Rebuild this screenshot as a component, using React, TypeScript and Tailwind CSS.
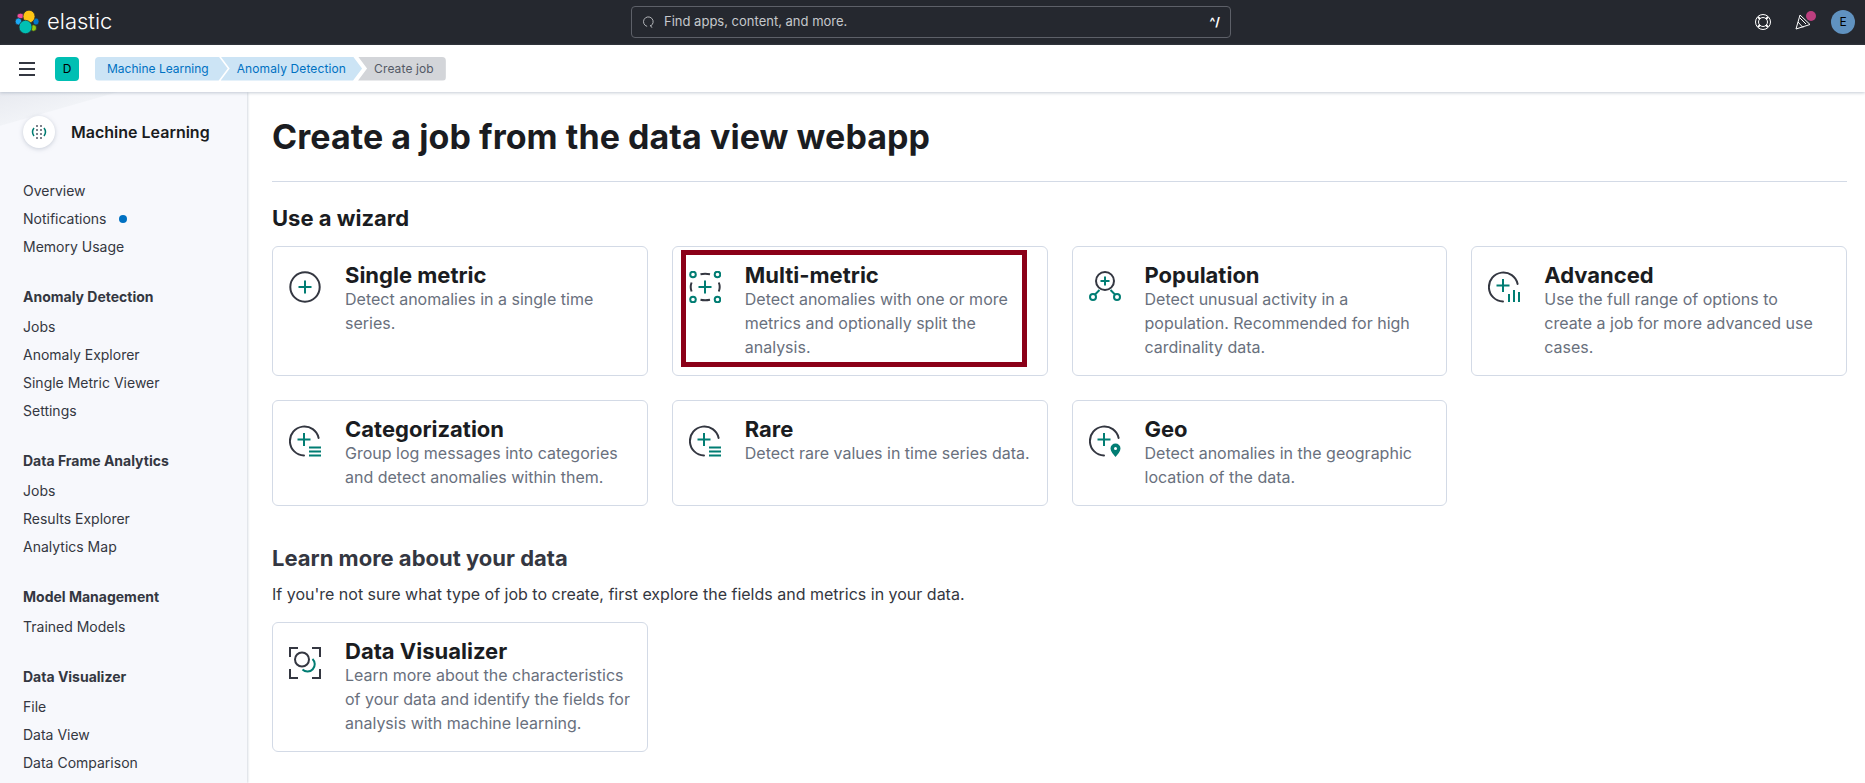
import type { ReactNode } from "react";

const TEAL = "#017d73";
const INK = "#343741";

function Arc() {
  return <path d="M29.6 13 A14.5 14.5 0 1 0 15 30.5" fill="none" stroke={INK} strokeWidth="2" strokeLinecap="round" />;
}

function OffsetPlus() {
  return <path d="M15 8v13M8.5 14.5h13" stroke={TEAL} strokeWidth="2" fill="none" />;
}

const icons: Record<string, ReactNode> = {
  single: (
    <>
      <circle cx="16" cy="16" r="14.7" fill="none" stroke={INK} strokeWidth="2" />
      <path d="M16 9.5v13M9.5 16h13" stroke={TEAL} strokeWidth="2" fill="none" />
    </>
  ),
  multi: (
    <>
      <g fill="none" stroke={TEAL} strokeWidth="2">
        <circle cx="4" cy="3.500" r="2.800" />
        <circle cx="28.500" cy="3.500" r="2.800" />
        <circle cx="4" cy="28.500" r="2.800" />
        <circle cx="28.500" cy="28.500" r="2.800" />
        <path d="M16 9.500v13M9.500 16h13" />
      </g>
      <path d="M11.500 3.300q4.500-1 9.500 0M11.500 28.700q4.500 1 9.500 0M2.600 11.500q-1.800 4.500 0 9M29.800 11.500q1.800 4.500 0 9" fill="none" stroke={INK} strokeWidth="2" />
    </>
  ),
  population: (
    <>
      <circle cx="16" cy="10" r="9" fill="none" stroke={INK} strokeWidth="2" />
      <path d="M16 5.500v9M11.500 10h9" stroke={TEAL} strokeWidth="2" fill="none" />
      <g fill="none" stroke={TEAL} strokeWidth="2">
        <circle cx="4" cy="26" r="3" />
        <circle cx="28" cy="26" r="3" />
        <path d="M6 23.500l4.500-4.500M26 23.500l-4.500-4.500" />
      </g>
    </>
  ),
  advanced: (
    <>
      <Arc />
      <OffsetPlus />
      <path d="M21 23v8M26 19v12M31 21v10" stroke={TEAL} strokeWidth="2" fill="none" />
    </>
  ),
  categorization: (
    <>
      <Arc />
      <OffsetPlus />
      <path d="M20 22.500h12M20 26.500h12M20 30.500h12" stroke={TEAL} strokeWidth="2" fill="none" />
    </>
  ),
  geo: (
    <>
      <Arc />
      <OffsetPlus />
      <path d="M26.500 18.500a5 5 0 0 1 5 5c0 3-3 6-5 8.500-2-2.500-5-5.500-5-8.500a5 5 0 0 1 5-5z" fill={TEAL} />
      <circle cx="26.500" cy="23.500" r="1.500" fill="#fff" />
    </>
  ),
  visualizer: (
    <>
      <path d="M9 1H1v9M23 1h8v9M1 22v9h8M31 22v9h-8" fill="none" stroke={INK} strokeWidth="2" />
      <circle cx="13" cy="12.500" r="7" fill="none" stroke={INK} strokeWidth="2" />
      <path d="M23.500 12a7 7 0 0 1-10 10.500" fill="none" stroke={TEAL} strokeWidth="2" />
    </>
  ),
};

type CardProps = { icon: string; title: string; text: string; marked?: boolean };

const wizards: CardProps[] = [
  { icon: "single", title: "Single metric", text: "Detect anomalies in a single time series." },
  { icon: "multi", title: "Multi-metric", text: "Detect anomalies with one or more metrics and optionally split the analysis.", marked: true },
  { icon: "population", title: "Population", text: "Detect unusual activity in a population. Recommended for high cardinality data." },
  { icon: "advanced", title: "Advanced", text: "Use the full range of options to create a job for more advanced use cases." },
  { icon: "categorization", title: "Categorization", text: "Group log messages into categories and detect anomalies within them." },
  { icon: "categorization", title: "Rare", text: "Detect rare values in time series data." },
  { icon: "geo", title: "Geo", text: "Detect anomalies in the geographic location of the data." },
];

const navGroups = [
  { title: "", items: ["Overview", "Notifications", "Memory Usage"] },
  { title: "Anomaly Detection", items: ["Jobs", "Anomaly Explorer", "Single Metric Viewer", "Settings"] },
  { title: "Data Frame Analytics", items: ["Jobs", "Results Explorer", "Analytics Map"] },
  { title: "Model Management", items: ["Trained Models"] },
  { title: "Data Visualizer", items: ["File", "Data View", "Data Comparison"] },
];

function Card({ icon, title, text, marked }: CardProps) {
  return (
    <div className="relative flex gap-6 rounded-md border border-[#d3dae6] bg-white p-4">
      <svg viewBox="0 0 32 32" className="mt-2 h-8 w-8 shrink-0">
        {icons[icon]}
      </svg>
      <div className="min-w-0">
        <div className="text-[22px] leading-6 font-bold text-[#1a1c21]">{title}</div>
        <div className="text-base leading-6 text-[#69707d]">{text}</div>
      </div>
      {marked && <div className="absolute top-[3px] left-2 h-[117px] w-[346px] border-[5px] border-[#8b0018]" />}
    </div>
  );
}

function ElasticLogo() {
  return (
    <svg viewBox="0 0 24 24" className="h-6 w-6" stroke="#25282f" strokeWidth="0.7">
      <ellipse cx="5.500" cy="6" rx="3.500" ry="2.800" fill="#f04e98" />
      <ellipse cx="3.500" cy="11.500" rx="3.300" ry="3.500" fill="#1ba9f5" />
      <ellipse cx="21" cy="11.500" rx="3" ry="3.500" fill="#0077cc" />
      <ellipse cx="18.500" cy="18" rx="3" ry="3.200" fill="#93c90e" />
      <ellipse cx="14" cy="6.500" rx="6" ry="6.300" fill="#fec514" />
      <ellipse cx="10.500" cy="17" rx="6.500" ry="6.700" fill="#00bfb3" />
    </svg>
  );
}

export default function App() {
  return (
    <div className="flex h-[783px] flex-col overflow-hidden bg-white font-['Inter',sans-serif]">
      {/* top bar */}
      <header className="flex h-[45px] shrink-0 items-center bg-[#25282f] pr-2.5 pb-0.5 pl-[15px]">
        <div className="flex w-[616px] items-center gap-2">
          <ElasticLogo />
          <span className="text-[22px] font-light text-white">elastic</span>
        </div>
        <div className="flex h-8 w-[600px] items-center rounded border border-[#5d6068] pr-2.5 pl-[9px] text-[13px] text-[#c6c8cc]">
          <svg viewBox="0 0 16 16" className="h-3.5 w-3.5" fill="none" stroke="currentColor">
            <path d="M11 12.500A5.500 5.500 0 1 0 7 13M10.500 11.500l2 3" />
          </svg>
          <span className="ml-[9px] flex-1">Find apps, content, and more.</span>
          <span className="text-xs font-bold text-white">^/</span>
        </div>
        <div className="flex flex-1 items-center justify-end">
          <svg viewBox="0 0 16 16" className="h-4 w-4" fill="none" stroke="#fff" strokeWidth="1">
            <circle cx="8" cy="8" r="7.500" />
            <circle cx="8" cy="8" r="4.500" />
            <path d="M3 3l2 2M13 3l-2 2M3 13l2-2M13 13l-2-2" strokeWidth="2" />
          </svg>
          <div className="relative mr-5 ml-6">
            <svg viewBox="0 0 16 16" className="h-4 w-4" fill="none" stroke="#fff" strokeWidth="1">
              <path d="M5 1L1 15l14-4.500zM3 8l5 5.500M5 4l6 6" />
            </svg>
            <span className="absolute -top-[3px] left-[11px] h-2.5 w-2.5 rounded-full bg-[#bc3f7f]" />
          </div>
          <div className="flex h-6 w-6 items-center justify-center rounded-full bg-[#6092c0] text-xs text-black">E</div>
        </div>
      </header>

      {/* breadcrumb bar */}
      <div className="relative z-20 flex h-[47px] shrink-0 items-center bg-white pl-[19px] shadow-[0_1px_3px_rgba(152,162,179,0.55)]">
        <div className="flex w-4 flex-col gap-1">
          <span className="h-0.5 bg-[#343741]" />
          <span className="h-0.5 bg-[#343741]" />
          <span className="h-0.5 bg-[#343741]" />
        </div>
        <div className="ml-5 flex h-6 w-6 items-center justify-center rounded bg-[#00bfb3] text-xs text-black">D</div>
        <div className="ml-4 flex text-xs">
          <div className="flex h-6 items-center rounded-l bg-[#cce4f5] pr-[19px] pl-3 text-[#0071c2] [clip-path:polygon(0_0,calc(100%-9px)_0,100%_50%,calc(100%-9px)_100%,0_100%)]">
            Machine Learning
          </div>
          <div className="-ml-[7px] flex h-6 items-center bg-[#cce4f5] px-4 tracking-[0.12px] text-[#0071c2] [clip-path:polygon(0_0,calc(100%-9px)_0,100%_50%,calc(100%-9px)_100%,0_100%,9px_50%)]">
            Anomaly Detection
          </div>
          <div className="-ml-1 flex h-6 items-center rounded-r bg-[#d3d5d9] pr-3 pl-4 tracking-[0.12px] text-[#535966] [clip-path:polygon(0_0,100%_0,100%_100%,0_100%,9px_50%)]">
            Create job
          </div>
        </div>
      </div>

      <div className="flex min-h-0 flex-1">
        {/* side nav */}
        <aside className="relative z-10 w-[247px] shrink-0 bg-[#f7f8fc] bg-[linear-gradient(164deg,#e8eaf0_0,#f1f3f7_32px,transparent_33px)] bg-no-repeat pl-[23px] shadow-[1px_0_2px_rgba(152,162,179,0.4)] [background-size:100%_120px]">
          <div className="flex h-[64px] items-center gap-4 pt-[16px]">
            <div className="flex h-8 w-8 items-center justify-center rounded-full bg-white shadow-[0_1px_4px_rgba(152,162,179,0.5)]">
              <svg viewBox="0 0 16 16" className="h-4 w-4" fill="none">
                <g fill="#535966">
                  <circle cx="6" cy="2" r="1" />
                  <circle cx="10" cy="2" r="1" />
                  <circle cx="6" cy="6" r="1" />
                  <circle cx="10" cy="6" r="1" />
                  <circle cx="6" cy="10" r="1" />
                  <circle cx="10" cy="10" r="1" />
                  <circle cx="6" cy="14" r="1" />
                  <circle cx="10" cy="14" r="1" />
                </g>
                <path d="M3 4Q0 8 3 12M13 4q3 4 0 8" stroke={TEAL} strokeWidth="1.500" />
              </svg>
            </div>
            <span className="text-base leading-6 font-semibold text-[#1a1c21]">Machine Learning</span>
          </div>
          <div className="mt-[21px] flex flex-col gap-[26px]">
            {navGroups.map((group, i) => (
              <div key={i}>
                {group.title && <div className="mb-1.5 text-sm leading-5 font-bold text-[#343741]">{group.title}</div>}
                {group.items.map((item) => (
                  <div key={item} className="flex h-7 items-center text-sm text-[#343741]">
                    {item}
                    {item === "Notifications" && <span className="ml-3 h-2 w-2 rounded-full bg-[#0071c2]" />}
                  </div>
                ))}
              </div>
            ))}
          </div>
        </aside>

        {/* main */}
        <main className="min-w-0 flex-1 pt-[21px] pr-[18px] pl-[25px]">
          <h1 className="text-[34px] leading-12 font-bold tracking-[0.06px] text-[#1a1c21]">Create a job from the data view webapp</h1>
          <div className="mt-5 h-px bg-[#d3dae6]" />
          <h2 className="mt-[22px] mb-3.5 text-[22px] leading-7 font-bold text-[#1a1c21]">Use a wizard</h2>
          <div className="grid grid-cols-4 gap-6">
            {wizards.map((card) => (
              <Card key={card.title} {...card} />
            ))}
          </div>
          <h2 className="mt-[38px] text-[22px] leading-7 font-bold text-[#343741]">Learn more about your data</h2>
          <p className="mt-2.5 text-base leading-6 text-[#343741]">
            If you're not sure what type of job to create, first explore the fields and metrics in your data.
          </p>
          <div className="mt-4 grid grid-cols-4 gap-6">
            <Card
              icon="visualizer"
              title="Data Visualizer"
              text="Learn more about the characteristics of your data and identify the fields for analysis with machine learning."
            />
          </div>
        </main>
      </div>
    </div>
  );
}
